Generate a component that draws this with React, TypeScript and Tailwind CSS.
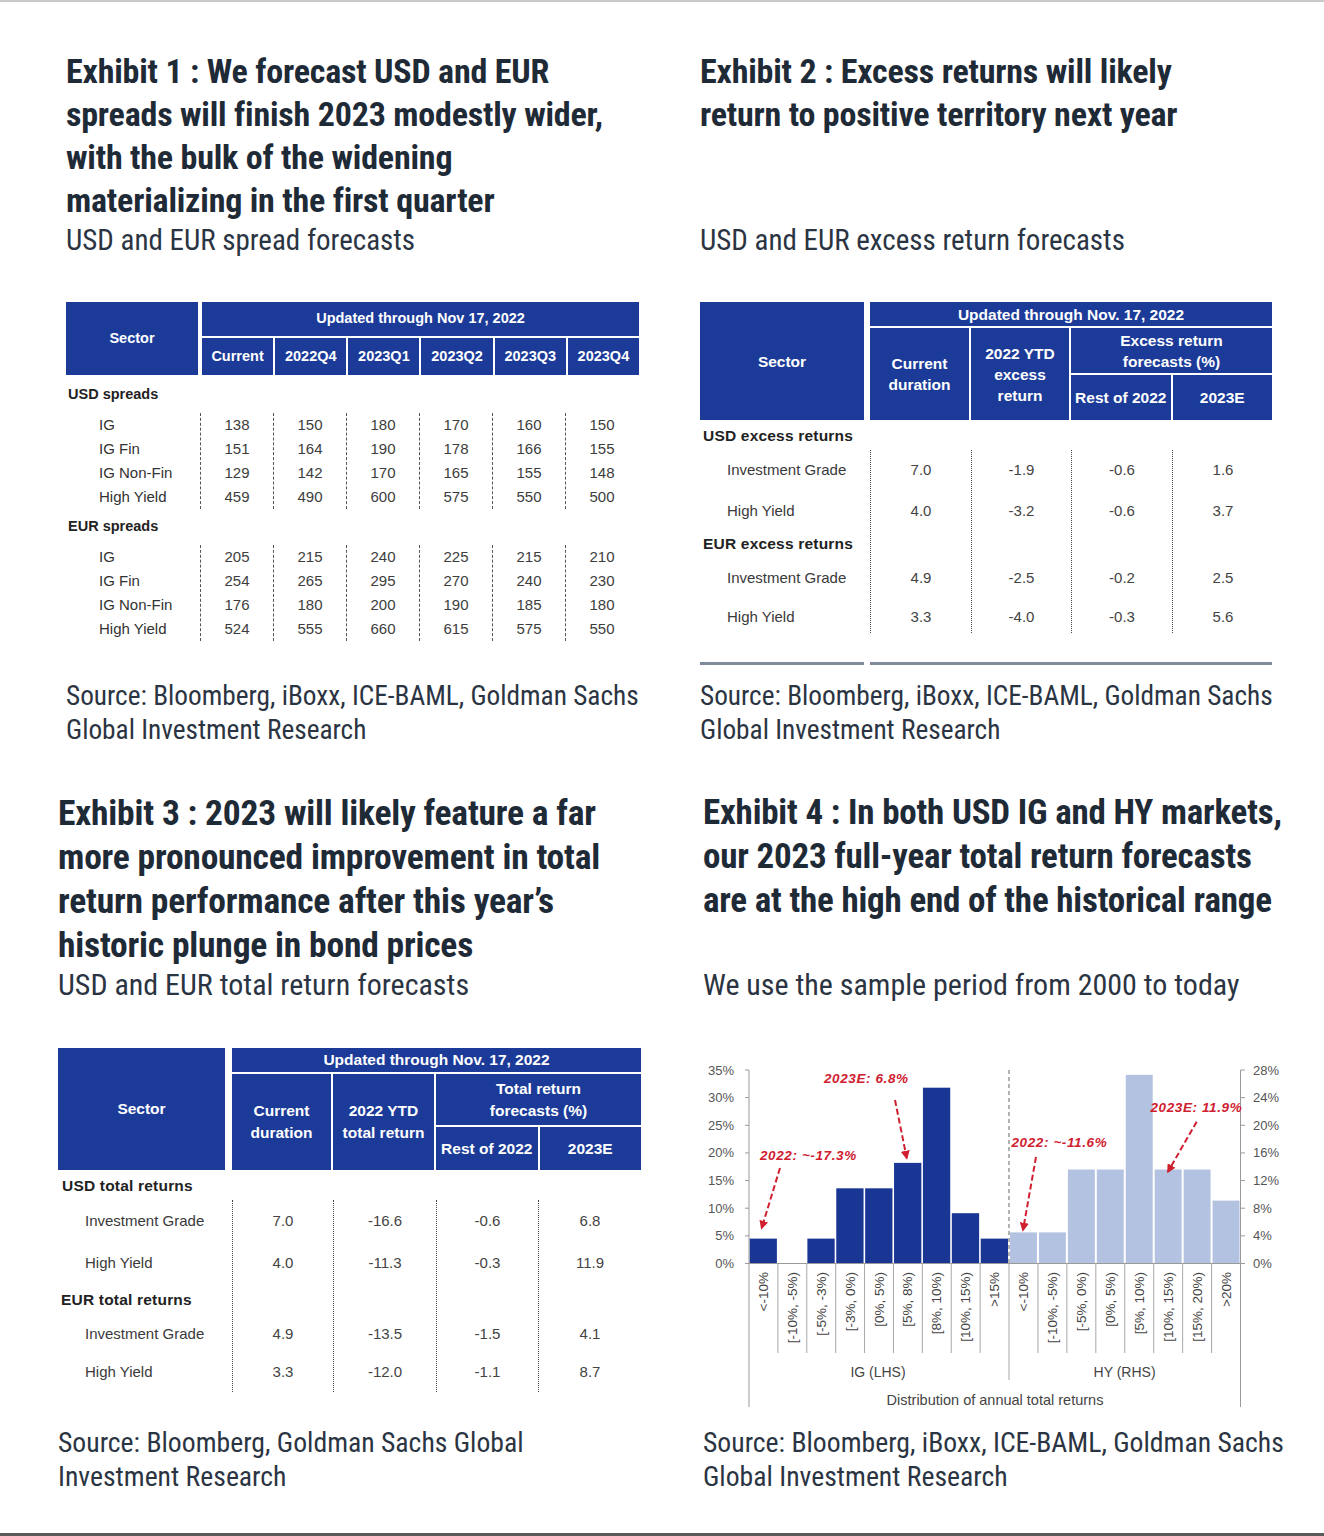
import React from "react";

const BLUE = "bg-[#1c3b99]";
const TITLE =
  "font-['Liberation_Sans_Narrow','Roboto_Condensed','DejaVu_Sans_Condensed',sans-serif] font-bold text-[#1f2a37] tracking-[-0.2px]";
const BODY =
  "font-['Liberation_Sans_Narrow','Roboto_Condensed','DejaVu_Sans_Condensed',sans-serif] text-[#2b3442]";
const TABLE = "font-['Liberation_Sans',Arial,sans-serif]";

function Lines({ lines }: { lines: string[] }) {
  return (
    <>
      {lines.map((l, i) => (
        <div key={i} className="whitespace-nowrap">
          {l}
        </div>
      ))}
    </>
  );
}

type Row = (string | number)[];

function SpreadBlock({ rows, className }: { rows: Row[]; className?: string }) {
  return (
    <div className={`flex text-[15px] text-[#3d3d3d] ${className ?? ""}`}>
      <div className="w-[134px] pl-[33px]">
        {rows.map((r) => (
          <div key={String(r[0])} className="h-[24px] leading-[24px] text-[#333]">
            {r[0]}
          </div>
        ))}
      </div>
      {[1, 2, 3, 4, 5, 6].map((c) => (
        <div key={c} className="w-[73px] border-l border-dashed border-[#555]">
          {rows.map((r, i) => (
            <div key={i} className="h-[24px] leading-[24px] text-center">
              {r[c]}
            </div>
          ))}
        </div>
      ))}
    </div>
  );
}

function Exhibit1Table() {
  const cols = ["Current", "2022Q4", "2023Q1", "2023Q2", "2023Q3", "2023Q4"];
  const usd: Row[] = [
    ["IG", 138, 150, 180, 170, 160, 150],
    ["IG Fin", 151, 164, 190, 178, 166, 155],
    ["IG Non-Fin", 129, 142, 170, 165, 155, 148],
    ["High Yield", 459, 490, 600, 575, 550, 500],
  ];
  const eur: Row[] = [
    ["IG", 205, 215, 240, 225, 215, 210],
    ["IG Fin", 254, 265, 295, 270, 240, 230],
    ["IG Non-Fin", 176, 180, 200, 190, 185, 180],
    ["High Yield", 524, 555, 660, 615, 575, 550],
  ];
  return (
    <div className={TABLE}>
      <div className="flex h-[73px] text-white font-bold text-[14.5px]">
        <div className={`w-[132px] ${BLUE} flex items-center justify-center`}>Sector</div>
        <div className="ml-[4px] w-[437px] flex flex-col">
          <div className={`h-[34px] ${BLUE} flex items-center justify-center`}>
            Updated through Nov 17, 2022
          </div>
          <div className="mt-[2px] flex-1 grid grid-cols-6 gap-[2px]">
            {cols.map((c) => (
              <div key={c} className={`${BLUE} flex items-center justify-center`}>
                {c}
              </div>
            ))}
          </div>
        </div>
      </div>
      <div className="mt-[7px] h-[24px] leading-[24px] pl-[2px] font-bold text-[14.5px] text-[#222]">
        USD spreads
      </div>
      <SpreadBlock rows={usd} className="mt-[7px]" />
      <div className="mt-[5px] h-[24px] leading-[24px] pl-[2px] font-bold text-[14.5px] text-[#222]">
        EUR spreads
      </div>
      <SpreadBlock rows={eur} className="mt-[7px]" />
    </div>
  );
}

type Cell = { label?: string; section?: boolean; vals?: string[]; h: number };

function ReturnBlock({
  cells,
  labelW,
  labelPl,
  colWs,
}: {
  cells: Cell[];
  labelW: string;
  labelPl: string;
  colWs: string[];
}) {
  return (
    <div className="flex text-[15px]">
      <div className={`${labelW}`}>
        {cells.map((c, i) => (
          <div
            key={i}
            style={{ height: c.h }}
            className={
              c.section
                ? "flex items-center pl-[3px] font-bold text-[15.5px] text-[#222] tracking-[0.2px]"
                : `flex items-center ${labelPl} text-[#3a3a3a]`
            }
          >
            {c.label}
          </div>
        ))}
      </div>
      {colWs.map((w, ci) => (
        <div key={ci} className={`${w} border-l border-dotted border-[#444]`}>
          {cells.map((c, i) => (
            <div key={i} style={{ height: c.h }} className="flex items-center justify-center text-[#444]">
              {c.vals ? c.vals[ci] : ""}
            </div>
          ))}
        </div>
      ))}
    </div>
  );
}

function Exhibit2Table() {
  const cells: Cell[] = [
    { label: "Investment Grade", vals: ["7.0", "-1.9", "-0.6", "1.6"], h: 40 },
    { label: "High Yield", vals: ["4.0", "-3.2", "-0.6", "3.7"], h: 42 },
    { label: "EUR excess returns", section: true, h: 23 },
    { label: "Investment Grade", vals: ["4.9", "-2.5", "-0.2", "2.5"], h: 46 },
    { label: "High Yield", vals: ["3.3", "-4.0", "-0.3", "5.6"], h: 32 },
  ];
  return (
    <div className={TABLE}>
      <div className="flex h-[118px] text-white font-bold text-[15.5px] leading-[21px] text-center">
        <div className={`w-[164px] ${BLUE} flex items-center justify-center`}>Sector</div>
        <div className="ml-[6px] w-[402px] flex flex-col">
          <div className={`h-[24px] ${BLUE} flex items-center justify-center`}>
            Updated through Nov. 17, 2022
          </div>
          <div className="mt-[2px] flex-1 flex gap-[2px]">
            <div className={`w-[99px] ${BLUE} flex items-center justify-center`}>
              Current
              <br />
              duration
            </div>
            <div className={`w-[98px] ${BLUE} flex items-center justify-center`}>
              2022 YTD
              <br />
              excess
              <br />
              return
            </div>
            <div className="w-[201px] flex flex-col gap-[2px]">
              <div className={`h-[45px] ${BLUE} flex items-center justify-center`}>
                Excess return
                <br />
                forecasts (%)
              </div>
              <div className="flex-1 grid grid-cols-2 gap-[2px]">
                <div className={`${BLUE} flex items-center justify-center whitespace-nowrap`}>Rest of 2022</div>
                <div className={`${BLUE} flex items-center justify-center`}>2023E</div>
              </div>
            </div>
          </div>
        </div>
      </div>
      <div className="mt-[4px] h-[24px] flex items-center pl-[3px] font-bold text-[15.5px] text-[#222] tracking-[0.2px]">
        USD excess returns
      </div>
      <div className="mt-[2px]">
        <ReturnBlock
          cells={cells}
          labelW="w-[170px]"
          labelPl="pl-[27px]"
          colWs={["w-[101px]", "w-[100px]", "w-[101px]", "w-[101px]"]}
        />
      </div>
      <div className="mt-[29px] flex">
        <div className="w-[164px] h-[3px] bg-[#7f8b9a]" />
        <div className="ml-[6px] w-[402px] h-[3px] bg-[#7f8b9a]" />
      </div>
    </div>
  );
}

function Exhibit3Table() {
  const cells: Cell[] = [
    { label: "Investment Grade", vals: ["7.0", "-16.6", "-0.6", "6.8"], h: 42 },
    { label: "High Yield", vals: ["4.0", "-11.3", "-0.3", "11.9"], h: 42 },
    { label: "EUR total returns", section: true, h: 32 },
    { label: "Investment Grade", vals: ["4.9", "-13.5", "-1.5", "4.1"], h: 36 },
    { label: "High Yield", vals: ["3.3", "-12.0", "-1.1", "8.7"], h: 40 },
  ];
  return (
    <div className={TABLE}>
      <div className="flex h-[122px] text-white font-bold text-[15.5px] leading-[22px] text-center">
        <div className={`w-[167px] ${BLUE} flex items-center justify-center`}>Sector</div>
        <div className="ml-[7px] w-[409px] flex flex-col">
          <div className={`h-[24px] ${BLUE} flex items-center justify-center`}>
            Updated through Nov. 17, 2022
          </div>
          <div className="mt-[2px] flex-1 flex gap-[2px]">
            <div className={`w-[99px] ${BLUE} flex items-center justify-center`}>
              Current
              <br />
              duration
            </div>
            <div className={`w-[101px] ${BLUE} flex items-center justify-center whitespace-nowrap`}>
              2022 YTD
              <br />
              total return
            </div>
            <div className="w-[205px] flex flex-col gap-[2px]">
              <div className={`h-[51px] ${BLUE} flex items-center justify-center`}>
                Total return
                <br />
                forecasts (%)
              </div>
              <div className="flex-1 grid grid-cols-2 gap-[2px]">
                <div className={`${BLUE} flex items-center justify-center whitespace-nowrap`}>Rest of 2022</div>
                <div className={`${BLUE} flex items-center justify-center`}>2023E</div>
              </div>
            </div>
          </div>
        </div>
      </div>
      <div className="mt-[4px] h-[24px] flex items-center pl-[4px] font-bold text-[15.5px] text-[#222] tracking-[0.2px]">
        USD total returns
      </div>
      <div className="mt-[2px]">
        <ReturnBlock
          cells={cells}
          labelW="w-[174px]"
          labelPl="pl-[27px]"
          colWs={["w-[101px]", "w-[103px]", "w-[102px]", "w-[103px]"]}
        />
      </div>
    </div>
  );
}

function Chart() {
  const RED = "#d0202f";
  const base = 215.5;
  const top = 22;
  const igScale = (base - top) / 35;
  const hyScale = (base - top) / 28;
  const igX0 = 49;
  const igW = 28.89;
  const hyX0 = 309;
  const hyW = 28.94;
  const ig = [4.5, 0, 4.5, 13.6, 13.6, 18.2, 31.8, 9.1, 4.5];
  const hy = [4.5, 4.5, 13.6, 13.6, 27.3, 13.6, 13.6, 9.1];
  const igLabels = ["<-10%", "[-10%, -5%)", "[-5%, -3%)", "[-3%, 0%)", "[0%, 5%)", "[5%, 8%)", "[8%, 10%)", "[10%, 15%)", ">15%"];
  const hyLabels = ["<-10%", "[-10%, -5%)", "[-5%, 0%)", "[0%, 5%)", "[5%, 10%)", "[10%, 15%)", "[15%, 20%)", ">20%"];
  const arrows = [
    [195, 52, 206.7, 110],
    [80, 120, 61.7, 180],
    [336, 109, 323, 182],
    [496.7, 73.7, 468, 123.7],
  ];
  return (
    <svg width="600" height="378" viewBox="0 0 600 378" className="-ml-[3px] block font-['Liberation_Sans',Arial,sans-serif]">
      <defs>
        <marker id="ah" viewBox="0 0 10 10" refX="8" refY="5" markerWidth="4.5" markerHeight="4.5" orient="auto">
          <path d="M0,0 L10,5 L0,10 z" fill={RED} />
        </marker>
      </defs>
      {ig.map((v, i) =>
        v > 0 ? (
          <rect key={`ig${i}`} x={igX0 + i * igW + 0.6} y={base - v * igScale} width={igW - 1.6} height={v * igScale} fill="#1a3694" />
        ) : null
      )}
      {hy.map((v, i) => (
        <rect key={`hy${i}`} x={hyX0 + i * hyW + 1} y={base - v * hyScale} width={hyW - 2} height={v * hyScale} fill="#b3c2e0" />
      ))}
      <line x1={49} y1={top} x2={49} y2={359} stroke="#9a9a9a" strokeWidth={1} />
      {Array.from({ length: 8 }).map((_, i) => {
        const y = base - i * 5 * igScale;
        return (
          <g key={`lt${i}`}>
            <line x1={45} y1={y} x2={49} y2={y} stroke="#9a9a9a" />
            <text x={34} y={y} textAnchor="end" dominantBaseline="central" fontSize="13" fill="#555">
              {i * 5}%
            </text>
          </g>
        );
      })}
      <line x1={540.5} y1={top} x2={540.5} y2={359} stroke="#9a9a9a" strokeWidth={1} />
      {Array.from({ length: 8 }).map((_, i) => {
        const y = base - i * 4 * hyScale;
        return (
          <g key={`rt${i}`}>
            <line x1={540.5} y1={y} x2={545} y2={y} stroke="#9a9a9a" />
            <text x={553} y={y} dominantBaseline="central" fontSize="13" fill="#555">
              {i * 4}%
            </text>
          </g>
        );
      })}
      <line x1={49} y1={base} x2={540.5} y2={base} stroke="#9a9a9a" />
      {Array.from({ length: 8 }).map((_, i) => (
        <line key={`is${i}`} x1={igX0 + (i + 1) * igW} y1={base} x2={igX0 + (i + 1) * igW} y2={305} stroke="#a8a8a8" />
      ))}
      {Array.from({ length: 7 }).map((_, i) => (
        <line key={`hs${i}`} x1={hyX0 + (i + 1) * hyW} y1={base} x2={hyX0 + (i + 1) * hyW} y2={305} stroke="#a8a8a8" />
      ))}
      <line x1={309} y1={top} x2={309} y2={base} stroke="#a0a0a0" strokeWidth={1.6} strokeDasharray="4 3" />
      <line x1={309} y1={base} x2={309} y2={332} stroke="#a8a8a8" />
      {igLabels.map((l, i) => {
        const cx = igX0 + i * igW + igW / 2;
        return (
          <text key={`il${i}`} x={cx} y={224} transform={`rotate(-90 ${cx} 224)`} textAnchor="end" dominantBaseline="central" fontSize="13.5" fill="#444">
            {l}
          </text>
        );
      })}
      {hyLabels.map((l, i) => {
        const cx = hyX0 + i * hyW + hyW / 2;
        return (
          <text key={`hl${i}`} x={cx} y={224} transform={`rotate(-90 ${cx} 224)`} textAnchor="end" dominantBaseline="central" fontSize="13.5" fill="#444">
            {l}
          </text>
        );
      })}
      <text x={178} y={324} textAnchor="middle" dominantBaseline="central" fontSize="14" fill="#444">
        IG (LHS)
      </text>
      <text x={424.6} y={324} textAnchor="middle" dominantBaseline="central" fontSize="14" fill="#444">
        HY (RHS)
      </text>
      <text x={295} y={352} textAnchor="middle" dominantBaseline="central" fontSize="14.5" fill="#444">
        Distribution of annual total returns
      </text>
      <g fill={RED} fontSize="13.5" fontWeight="bold" fontStyle="italic" letterSpacing="0.6">
        <text x={124} y={30} dominantBaseline="central">2023E: 6.8%</text>
        <text x={60} y={107} dominantBaseline="central">2022: ~-17.3%</text>
        <text x={311.5} y={94} dominantBaseline="central">2022: ~-11.6%</text>
        <text x={450.5} y={59} dominantBaseline="central">2023E: 11.9%</text>
      </g>
      {arrows.map((a, i) => (
        <line key={`ar${i}`} x1={a[0]} y1={a[1]} x2={a[2]} y2={a[3]} stroke={RED} strokeWidth={2} strokeDasharray="6 3" markerEnd="url(#ah)" />
      ))}
    </svg>
  );
}

export default function App() {
  return (
    <div className="w-[1324px] h-[1536px] bg-white border-t-2 border-[#c9c9c9] flex flex-col overflow-hidden">
      <div className="grid grid-cols-[642px_682px] pt-[48px]">
        <section className="pl-[66px]">
          <div className={`${TITLE} h-[172px] text-[34px] leading-[43px]`}>
            <Lines
              lines={[
                "Exhibit 1 : We forecast USD and EUR",
                "spreads will finish 2023 modestly wider,",
                "with the bulk of the widening",
                "materializing in the first quarter",
              ]}
            />
          </div>
          <div className={`${BODY} text-[29px] leading-[36px] whitespace-nowrap`}>USD and EUR spread forecasts</div>
          <div className="mt-[44px] h-[377px]">
            <Exhibit1Table />
          </div>
          <div className={`${BODY} text-[27.3px] leading-[34px]`}>
            <Lines lines={["Source: Bloomberg, iBoxx, ICE-BAML, Goldman Sachs", "Global Investment Research"]} />
          </div>
        </section>
        <section className="pl-[58px]">
          <div className={`${TITLE} h-[172px] text-[34px] leading-[43px]`}>
            <Lines lines={["Exhibit 2 : Excess returns will likely", "return to positive territory next year"]} />
          </div>
          <div className={`${BODY} text-[29px] leading-[36px] whitespace-nowrap`}>USD and EUR excess return forecasts</div>
          <div className="mt-[44px] h-[377px]">
            <Exhibit2Table />
          </div>
          <div className={`${BODY} text-[27.3px] leading-[34px]`}>
            <Lines lines={["Source: Bloomberg, iBoxx, ICE-BAML, Goldman Sachs", "Global Investment Research"]} />
          </div>
        </section>
      </div>
      <div className="grid grid-cols-[642px_682px] mt-[44px]">
        <section className="pl-[58px]">
          <div className={`${TITLE} h-[176px] text-[35.5px] leading-[44px]`}>
            <Lines
              lines={[
                "Exhibit 3 : 2023 will likely feature a far",
                "more pronounced improvement in total",
                "return performance after this year\u2019s",
                "historic plunge in bond prices",
              ]}
            />
          </div>
          <div className={`${BODY} text-[30px] leading-[36px] whitespace-nowrap`}>USD and EUR total return forecasts</div>
          <div className="mt-[45px] h-[378px]">
            <Exhibit3Table />
          </div>
          <div className={`${BODY} text-[27.7px] leading-[34px]`}>
            <Lines lines={["Source: Bloomberg, Goldman Sachs Global", "Investment Research"]} />
          </div>
        </section>
        <section className="pl-[61px]">
          <div className={`${TITLE} h-[176px] text-[35px] leading-[44px]`}>
            <Lines
              lines={[
                "Exhibit 4 : In both USD IG and HY markets,",
                "our 2023 full-year total return forecasts",
                "are at the high end of the historical range",
              ]}
            />
          </div>
          <div className={`${BODY} text-[30px] leading-[36px] whitespace-nowrap`}>
            We use the sample period from 2000 to today
          </div>
          <div className="mt-[45px] h-[378px]">
            <Chart />
          </div>
          <div className={`${BODY} text-[27.7px] leading-[34px]`}>
            <Lines lines={["Source: Bloomberg, iBoxx, ICE-BAML, Goldman Sachs", "Global Investment Research"]} />
          </div>
        </section>
      </div>
      <div className="mt-auto h-[3px] bg-[#5a5a5a]" />
    </div>
  );
}
